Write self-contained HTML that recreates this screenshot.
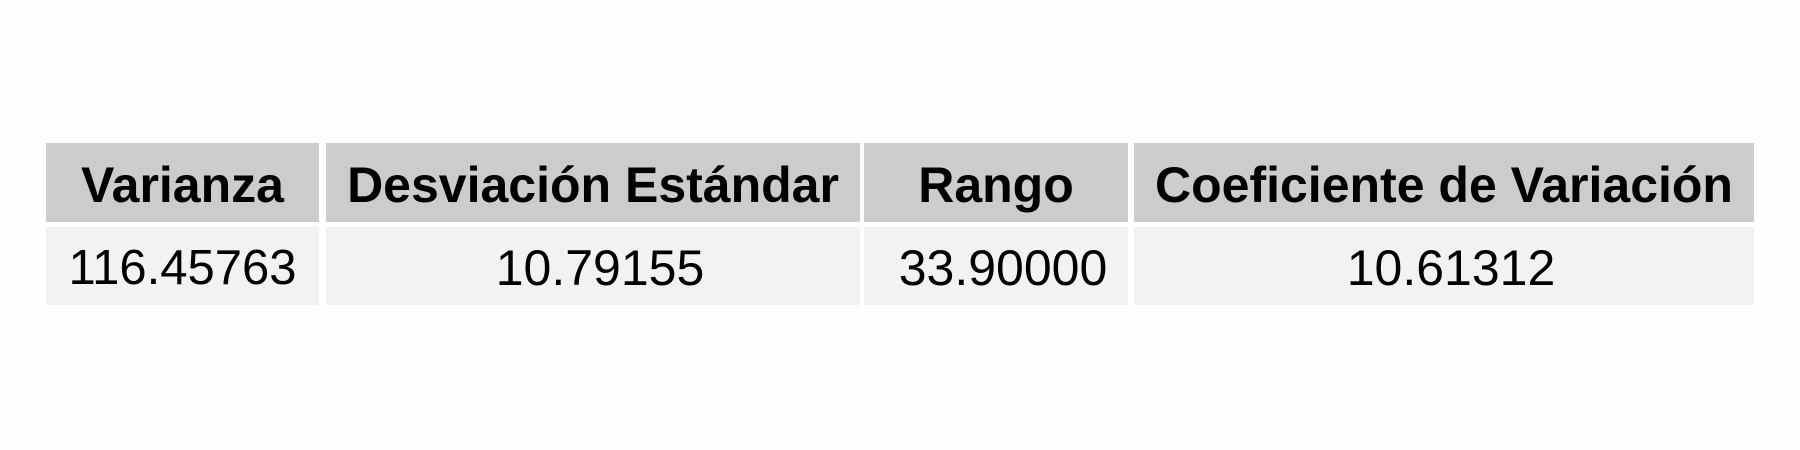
<!DOCTYPE html>
<html><head><style>
body{margin:0;width:1800px;height:450px;background:#fefefe;position:relative;font-family:"Liberation Sans",Arial,sans-serif;overflow:hidden}
.c{position:absolute;display:flex;align-items:center;justify-content:center;font-size:50px;color:#000;white-space:nowrap;box-sizing:border-box;padding-top:4px}
.h{background:#cccccc;font-weight:bold;top:143px;height:79px}
.r{background:#f2f2f2;top:227px;height:78px}
.s{padding-left:14px}
</style></head><body>
<div class="c h" style="left:46px;width:273px">Varianza</div>
<div class="c h" style="left:326px;width:534px">Desviación Estándar</div>
<div class="c h" style="left:864px;width:264px">Rango</div>
<div class="c h" style="left:1134px;width:620px">Coeficiente de Variación</div>
<div class="c r" style="left:46px;width:273px;font-size:49px">116.45763</div>
<div class="c r s" style="left:326px;width:534px">10.79155</div>
<div class="c r s" style="left:864px;width:264px">33.90000</div>
<div class="c r s" style="left:1134px;width:620px">10.61312</div>
</body></html>
